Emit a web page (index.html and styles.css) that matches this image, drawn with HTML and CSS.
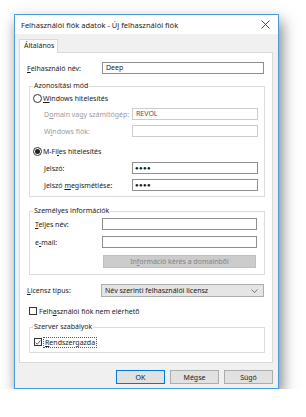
FILE: index.html
```html
<!DOCTYPE html>
<html lang="hu">
<head>
  <meta charset="UTF-8">
  <title>Felhasználói fiók adatok</title>
  <link rel="stylesheet" href="styles.css">
</head>
<body>

  <div class="window">
    <div class="titlebar">
      <span class="title">Felhasználói fiók adatok - Új felhasználói fiók</span>
      <svg class="close" width="9" height="9" viewBox="0 0 9 9">
        <path d="M0.5 0.5 L8.5 8.5 M8.5 0.5 L0.5 8.5" stroke="#333" stroke-width="0.9" fill="none"/>
      </svg>
    </div>

    <div class="dialog-body">
      <div class="tabs">
        <div class="tab">Általános</div>
      </div>

      <div class="panel">
        <div class="row row-user">
          <span class="lbl lbl-main"><u>F</u>elhasználó név:</span>
          <div class="field field-user">Deep</div>
        </div>

        <!-- Azonosítási mód -->
        <fieldset class="group group-auth">
          <legend>Azonosítási mód</legend>
          <div class="choice">
            <span class="radio"></span>
            <span><u>W</u>indows hitelesítés</span>
          </div>
          <div class="row sub disabled row-domain">
            <span class="lbl lbl-sub">D<u>o</u>main vagy számítógép:</span>
            <div class="field field-sub off">REVOL</div>
          </div>
          <div class="row sub disabled row-gap">
            <span class="lbl lbl-sub">W<u>i</u>ndows fiók:</span>
            <div class="field field-sub off"></div>
          </div>
          <div class="choice choice-mfiles">
            <span class="radio checked"></span>
            <span>M-Fi<u>l</u>es hitelesítés</span>
          </div>
          <div class="row sub row-pass">
            <span class="lbl lbl-sub"><u>J</u>elszó:</span>
            <div class="field field-sub dots">●●●●</div>
          </div>
          <div class="row sub row-gap">
            <span class="lbl lbl-sub">Jelszó <u>m</u>egismétlése:</span>
            <div class="field field-sub dots">●●●●</div>
          </div>
        </fieldset>

        <!-- Személyes információk -->
        <fieldset class="group group-person">
          <legend>Személyes információk</legend>
          <div class="row row-person">
            <span class="lbl lbl-person"><u>T</u>eljes név:</span>
            <div class="field field-person"></div>
          </div>
          <div class="row row-person row-mail">
            <span class="lbl lbl-person">e<u>-</u>mail:</span>
            <div class="field field-person"></div>
          </div>
          <div class="btn btn-domain">In<u>f</u>ormáció kérés a domainből</div>
        </fieldset>

        <div class="row row-license">
          <span class="lbl lbl-license"><u>L</u>icensz típus:</span>
          <div class="select">
            <span>Név szerinti felhasználói licensz</span>
            <svg width="7" height="4" viewBox="0 0 7 4">
              <path d="M0.5 0.5 L3.5 3.5 L6.5 0.5" stroke="#555" stroke-width="0.8" fill="none"/>
            </svg>
          </div>
        </div>

        <div class="check-row">
          <span class="checkbox"></span>
          <span>Felh<u>a</u>sználói fiók nem elérhető</span>
        </div>

        <!-- Szerver szabályok -->
        <fieldset class="group group-server">
          <legend>Szerver szabályok</legend>
          <div class="check-row check-admin">
            <span class="checkbox">
              <svg width="7" height="7" viewBox="0 0 7 7">
                <path d="M0.8 3.6 L2.7 5.5 L6.3 1.2" stroke="#222" stroke-width="0.9" fill="none"/>
              </svg>
            </span>
            <span class="focus"><u>R</u>endszergazda</span>
          </div>
        </fieldset>
      </div>

      <div class="buttons">
        <div class="btn btn-default">OK</div>
        <div class="btn">Mégse</div>
        <div class="btn">Súgó</div>
      </div>
    </div>
  </div>

</body>
</html>
```

FILE: styles.css
```css
* {
  box-sizing: border-box;
}
body {
  margin: 0;
  padding: 14px 0 0 14px;
  background-color: #ffffff;
  font-family: 'Noto Sans', sans-serif;
  font-size: 7px;
  color: #1a1a1a;
}
u {
  text-decoration-thickness: 0.6px;
  text-underline-offset: 1px;
}
.window {
  width: 265px;
  height: 375px;
  border: 1px solid #4a98dd;
  background-color: #f0f0f0;
  box-shadow: 3px 7px 14px rgba(0, 0, 0, 0.5);
}
.titlebar {
  height: 19px;
  background-color: #ffffff;
  display: flex;
  align-items: center;
  justify-content: space-between;
  padding: 0 8px 0 6px;
}
.title {
  font-size: 7.5px;
  color: #1a1a1a;
}
.dialog-body {
  padding: 5px 5px 0 4px;
}
.tabs {
  display: flex;
  height: 13px;
}
.tab {
  width: 39px;
  height: 14px;
  background-color: #ffffff;
  border: 1px solid #d9d9d9;
  border-bottom: none;
  padding-left: 4px;
  line-height: 12px;
  position: relative;
  z-index: 1;
}
.panel {
  width: 254px;
  height: 311px;
  background-color: #ffffff;
  border: 1px solid #d9d9d9;
  padding: 9px 7px 0 7px;
}
.row {
  display: flex;
  align-items: center;
}
.lbl {
  flex: none;
}
.lbl-main {
  width: 75px;
}
.field {
  height: 12px;
  border: 1px solid #8f8f8f;
  background-color: #ffffff;
  padding-left: 3px;
  line-height: 10px;
  color: #1a1a1a;
}
.field-user {
  width: 162px;
}
.group {
  margin: 0;
  padding: 0;
  border: 1px solid #dcdcdc;
  min-inline-size: auto;
}
.group legend {
  margin-left: 3px;
  padding: 0 1px;
  line-height: 10px;
  color: #222;
}
.group-auth {
  margin: 7px 0 0 2px;
  padding-bottom: 5px;
}
.choice {
  display: flex;
  align-items: center;
  height: 10px;
  margin: 2px 0 0 3px;
}
.choice-mfiles {
  margin-top: 9px;
}
.radio {
  width: 9px;
  height: 9px;
  border: 1px solid #333;
  border-radius: 50%;
  margin-right: 1px;
  display: flex;
  align-items: center;
  justify-content: center;
}
.radio.checked::after {
  content: "";
  width: 5px;
  height: 5px;
  border-radius: 50%;
  background-color: #222;
}
.sub {
  margin: 5px 5px 0 14px;
}
.row-pass {
  margin-top: 6px;
}
.lbl-sub {
  width: 88px;
}
.field-sub {
  width: 126px;
}
.disabled .lbl {
  color: #9a9a9a;
}
.field.off {
  border-color: #cccccc;
  color: #555;
}
.dots {
  font-size: 6px;
  letter-spacing: 0.4px;
  line-height: 10px;
  padding-left: 2px;
  color: #111;
}
.group-person {
  margin: 9px 0 0 2px;
  padding-bottom: 6px;
}
.row-person {
  margin: 2px 6px 0 5px;
}
.row-mail {
  margin-top: 6px;
}
.lbl-person {
  width: 67px;
}
.field-person {
  width: 155px;
}
.btn {
  height: 14px;
  border: 1px solid #adadad;
  background-color: #e1e1e1;
  display: flex;
  align-items: center;
  justify-content: center;
  color: #1a1a1a;
}
.btn-domain {
  width: 153px;
  height: 13px;
  margin: 7px 0 0 73px;
  background-color: #cccccc;
  border-color: #bfbfbf;
  color: #838383;
}
.row-license {
  margin-top: 9px;
}
.lbl-license {
  width: 74px;
}
.select {
  width: 163px;
  height: 13px;
  border: 1px solid #adadad;
  background-color: #e5e5e5;
  display: flex;
  align-items: center;
  justify-content: space-between;
  padding: 0 5px 0 3px;
}
.check-row {
  display: flex;
  align-items: center;
  height: 10px;
  margin: 9px 0 0 2px;
}
.checkbox {
  width: 8px;
  height: 8px;
  border: 1px solid #333;
  background-color: #ffffff;
  margin-right: 2px;
  display: flex;
  align-items: center;
  justify-content: center;
}
.group-server {
  margin: 6px 0 0 2px;
  padding-bottom: 5px;
}
.check-admin {
  margin: 5px 0 0 4px;
}
.focus {
  outline: 1px dotted #555;
  padding: 0 1px;
  line-height: 9px;
}
.buttons {
  display: flex;
  justify-content: flex-end;
  gap: 5px;
  margin-top: 7px;
}
.buttons .btn {
  width: 49px;
}
.btn-default {
  border-color: #0078d7;
}
```
